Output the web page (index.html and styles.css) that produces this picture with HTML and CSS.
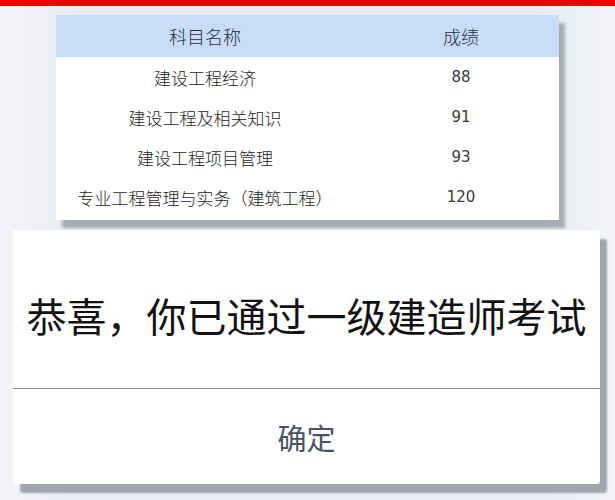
FILE: index.html
```html
<!DOCTYPE html>
<html lang="zh-CN">
<head>
<meta charset="utf-8">
<link rel="stylesheet" href="styles.css">
</head>
<body>
<div class="topbar"></div>
<div class="table">
  <div class="row head">
    <div class="c1">科目名称</div>
    <div class="c2">成绩</div>
  </div>
  <div class="row">
    <div class="c1">建设工程经济</div>
    <div class="c2 num">88</div>
  </div>
  <div class="row">
    <div class="c1">建设工程及相关知识</div>
    <div class="c2 num">91</div>
  </div>
  <div class="row">
    <div class="c1">建设工程项目管理</div>
    <div class="c2 num">93</div>
  </div>
  <div class="row last">
    <div class="c1">专业工程管理与实务（建筑工程）</div>
    <div class="c2 num">120</div>
  </div>
</div>
<div class="dialog">
  <div class="msg">恭喜，你已通过一级建造师考试</div>
  <div class="btn">确定</div>
</div>
</body>
</html>
```
FILE: styles.css
```css
html, body {
  margin: 0;
  padding: 0;
}
body {
  width: 615px;
  height: 500px;
  overflow: hidden;
  background: linear-gradient(90deg, #f3f4f7 0%, #e9ecf1 12%, #e9ecf1 88%, #f1f3f7 100%);
  font-family: "Noto Sans CJK SC", "Noto Sans", sans-serif;
}
.topbar {
  height: 6px;
  background: #f00000;
}
.table {
  margin: 9px 0 0 56px;
  width: 503px;
  background: #fff;
  box-shadow: 6px 8px 3px rgba(120, 128, 140, 0.6);
  padding-bottom: 3px;
}
.row {
  display: grid;
  grid-template-columns: 307px 1fr;
  height: 40px;
  align-items: center;
  font-size: 17px;
  font-weight: 300;
  color: #1e1e1e;
}
.row.head {
  height: 42px;
  background: #c9dcf6;
  color: #1f2d48;
  font-size: 18px;
}
.c1, .c2 {
  text-align: center;
  line-height: 1;
}
.c1 {
  padding-right: 9px;
}
.num {
  font-family: "DejaVu Sans", sans-serif;
  font-weight: 400;
  font-size: 15px;
  color: #3a3a3a;
}
.dialog {
  margin: 10px 0 0 13px;
  width: 587px;
  background: #fff;
  border-radius: 3px;
  box-shadow: 7px 9px 2px #a0a6ae;
}
.msg {
  height: 159px;
  display: flex;
  align-items: center;
  justify-content: center;
  padding-top: 12px;
  box-sizing: border-box;
  font-size: 40px;
  color: #111;
  border-bottom: 1px solid #8a8c90;
  white-space: nowrap;
}
.btn {
  height: 95px;
  display: flex;
  align-items: center;
  justify-content: center;
  font-size: 29px;
  color: #4a5362;
}
```
